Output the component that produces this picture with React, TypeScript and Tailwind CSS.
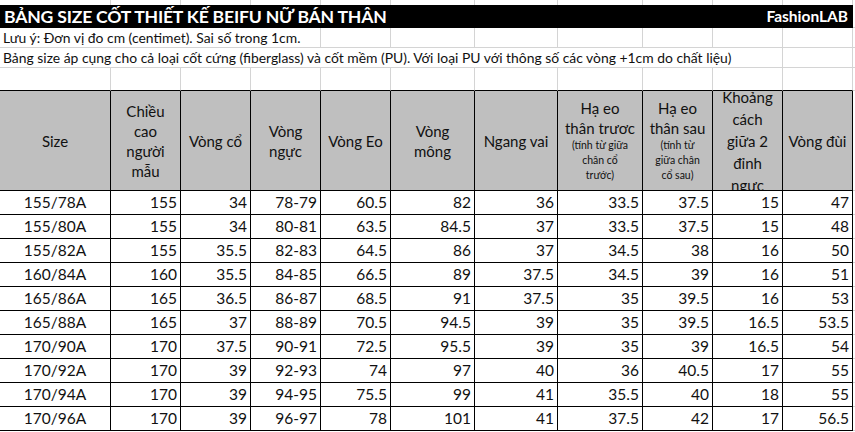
const rows: string[][] = [
  ['155/78A', '155', '34', '78-79', '60.5', '82', '36', '33.5', '37.5', '15', '47'],
  ['155/80A', '155', '34', '80-81', '63.5', '84.5', '37', '33.5', '37.5', '15', '48'],
  ['155/82A', '155', '35.5', '82-83', '64.5', '86', '37', '34.5', '38', '16', '50'],
  ['160/84A', '160', '35.5', '84-85', '66.5', '89', '37.5', '34.5', '39', '16', '51'],
  ['165/86A', '165', '36.5', '86-87', '68.5', '91', '37.5', '35', '39.5', '16', '53'],
  ['165/88A', '165', '37', '88-89', '70.5', '94.5', '39', '35', '39.5', '16.5', '53.5'],
  ['170/90A', '170', '37.5', '90-91', '72.5', '95.5', '39', '35', '39', '16.5', '54'],
  ['170/92A', '170', '39', '92-93', '74', '97', '40', '36', '40.5', '17', '55'],
  ['170/94A', '170', '39', '94-95', '75.5', '99', '41', '35.5', '40', '18', '55'],
  ['170/96A', '170', '39', '96-97', '78', '101', '41', '37.5', '42', '17', '56.5'],
];

const grid = 'grid grid-cols-[111px_70px_70px_70px_70px_84px_83px_85px_70px_70px_70px_1fr] overflow-hidden';

function GridCells({ count, extra = '' }: { count: number; extra?: string }) {
  return (
    <>
      {Array.from({ length: count }).map((_, i) => (
        <div key={i} className={`border-r border-[#d4d4d4] ${extra}`} />
      ))}
    </>
  );
}

function Head({ children, tall }: { children: React.ReactNode; tall?: boolean }) {
  return (
    <div
      className={`border-r border-b border-black bg-[#bfbfbf] flex flex-col items-center justify-center text-center text-[15px] text-[#111] overflow-hidden ${
        tall ? 'leading-[22px]' : 'leading-[20px]'
      }`}
    >
      {children}
    </div>
  );
}

function Small({ children }: { children: React.ReactNode }) {
  return <span className="text-[10.5px] leading-[15px]">{children}</span>;
}

export default function App() {
  return (
    <div className="w-[855px] h-[432px] bg-white overflow-hidden font-['Lato',sans-serif] text-[#111]">
      {/* top sliver of previous row */}
      <div className={`${grid} h-[5px]`}>
        <GridCells count={11} />
        <div />
      </div>

      {/* title bar */}
      <div className={`${grid} h-[23px] leading-none`}>
        <div className="col-span-11 bg-black text-white flex items-center justify-between pl-[4px] pr-[5px]">
          <span className="font-bold text-[17.6px] leading-[23px] tracking-[-0.2px] whitespace-nowrap">
            BẢNG SIZE CỐT THIẾT KẾ BEIFU NỮ BÁN THÂN
          </span>
          <span className="font-bold text-[15.5px] leading-[23px]">FashionLAB</span>
        </div>
        <div className="border-b border-[#d4d4d4]" />
      </div>

      {/* notes */}
      <div className={`${grid} h-[20px] text-[13.9px] leading-[19px]`}>
        <div className="col-span-4 border-r border-b border-[#d4d4d4] pl-[3px] whitespace-nowrap">
          Lưu ý: Đơn vị đo cm (centimet). Sai số trong 1cm.
        </div>
        <GridCells count={7} extra="border-b" />
        <div className="border-b border-[#d4d4d4]" />
      </div>
      <div className={`${grid} h-[20px] text-[13.9px] leading-[19px]`}>
        <div className="col-span-10 border-r border-b border-[#d4d4d4] pl-[3px] whitespace-nowrap">
          Bảng size áp cụng cho cả loại cốt cứng (fiberglass) và cốt mềm (PU). Với loại PU với thông số các vòng +1cm do chất liệu)
        </div>
        <GridCells count={1} extra="border-b" />
        <div className="border-b border-[#d4d4d4]" />
      </div>

      {/* empty row */}
      <div className={`${grid} h-[23px]`}>
        {Array.from({ length: 11 }).map((_, i) => (
          <div key={i} className="border-r border-r-[#d4d4d4] border-b border-b-black" />
        ))}
        <div className="border-b border-[#d4d4d4]" />
      </div>

      {/* header */}
      <div className={`${grid} h-[100px]`}>
        <Head>Size</Head>
        <Head>
          <span>Chiều</span>
          <span>cao</span>
          <span>người</span>
          <span>mẫu</span>
        </Head>
        <Head>Vòng cổ</Head>
        <Head>
          <span>Vòng</span>
          <span>ngực</span>
        </Head>
        <Head>Vòng Eo</Head>
        <Head>
          <span>Vòng</span>
          <span>mông</span>
        </Head>
        <Head>Ngang vai</Head>
        <Head>
          <span>Hạ eo</span>
          <span>thân trươc</span>
          <Small>(tính từ giữa</Small>
          <Small>chân cổ</Small>
          <Small>trước)</Small>
        </Head>
        <Head>
          <span>Hạ eo</span>
          <span>thân sau</span>
          <Small>(tính từ</Small>
          <Small>giữa chân</Small>
          <Small>cổ sau)</Small>
        </Head>
        <Head tall>
          <span>Khoảng</span>
          <span>cách</span>
          <span>giữa 2</span>
          <span>đỉnh</span>
          <span>ngực</span>
        </Head>
        <Head>Vòng đùi</Head>
        <div className="border-b border-[#d4d4d4]" />
      </div>

      {/* data */}
      {rows.map((r) => (
        <div key={r[0]} className={`${grid} h-[24px] text-[15.5px] leading-[23px]`}>
          {r.map((v, i) => (
            <div
              key={i}
              className={`border-r border-b border-black whitespace-nowrap ${i === 0 ? 'text-center' : 'text-right pr-[3px]'}`}
            >
              {v}
            </div>
          ))}
          <div className="border-b border-[#d4d4d4]" />
        </div>
      ))}
    </div>
  );
}
